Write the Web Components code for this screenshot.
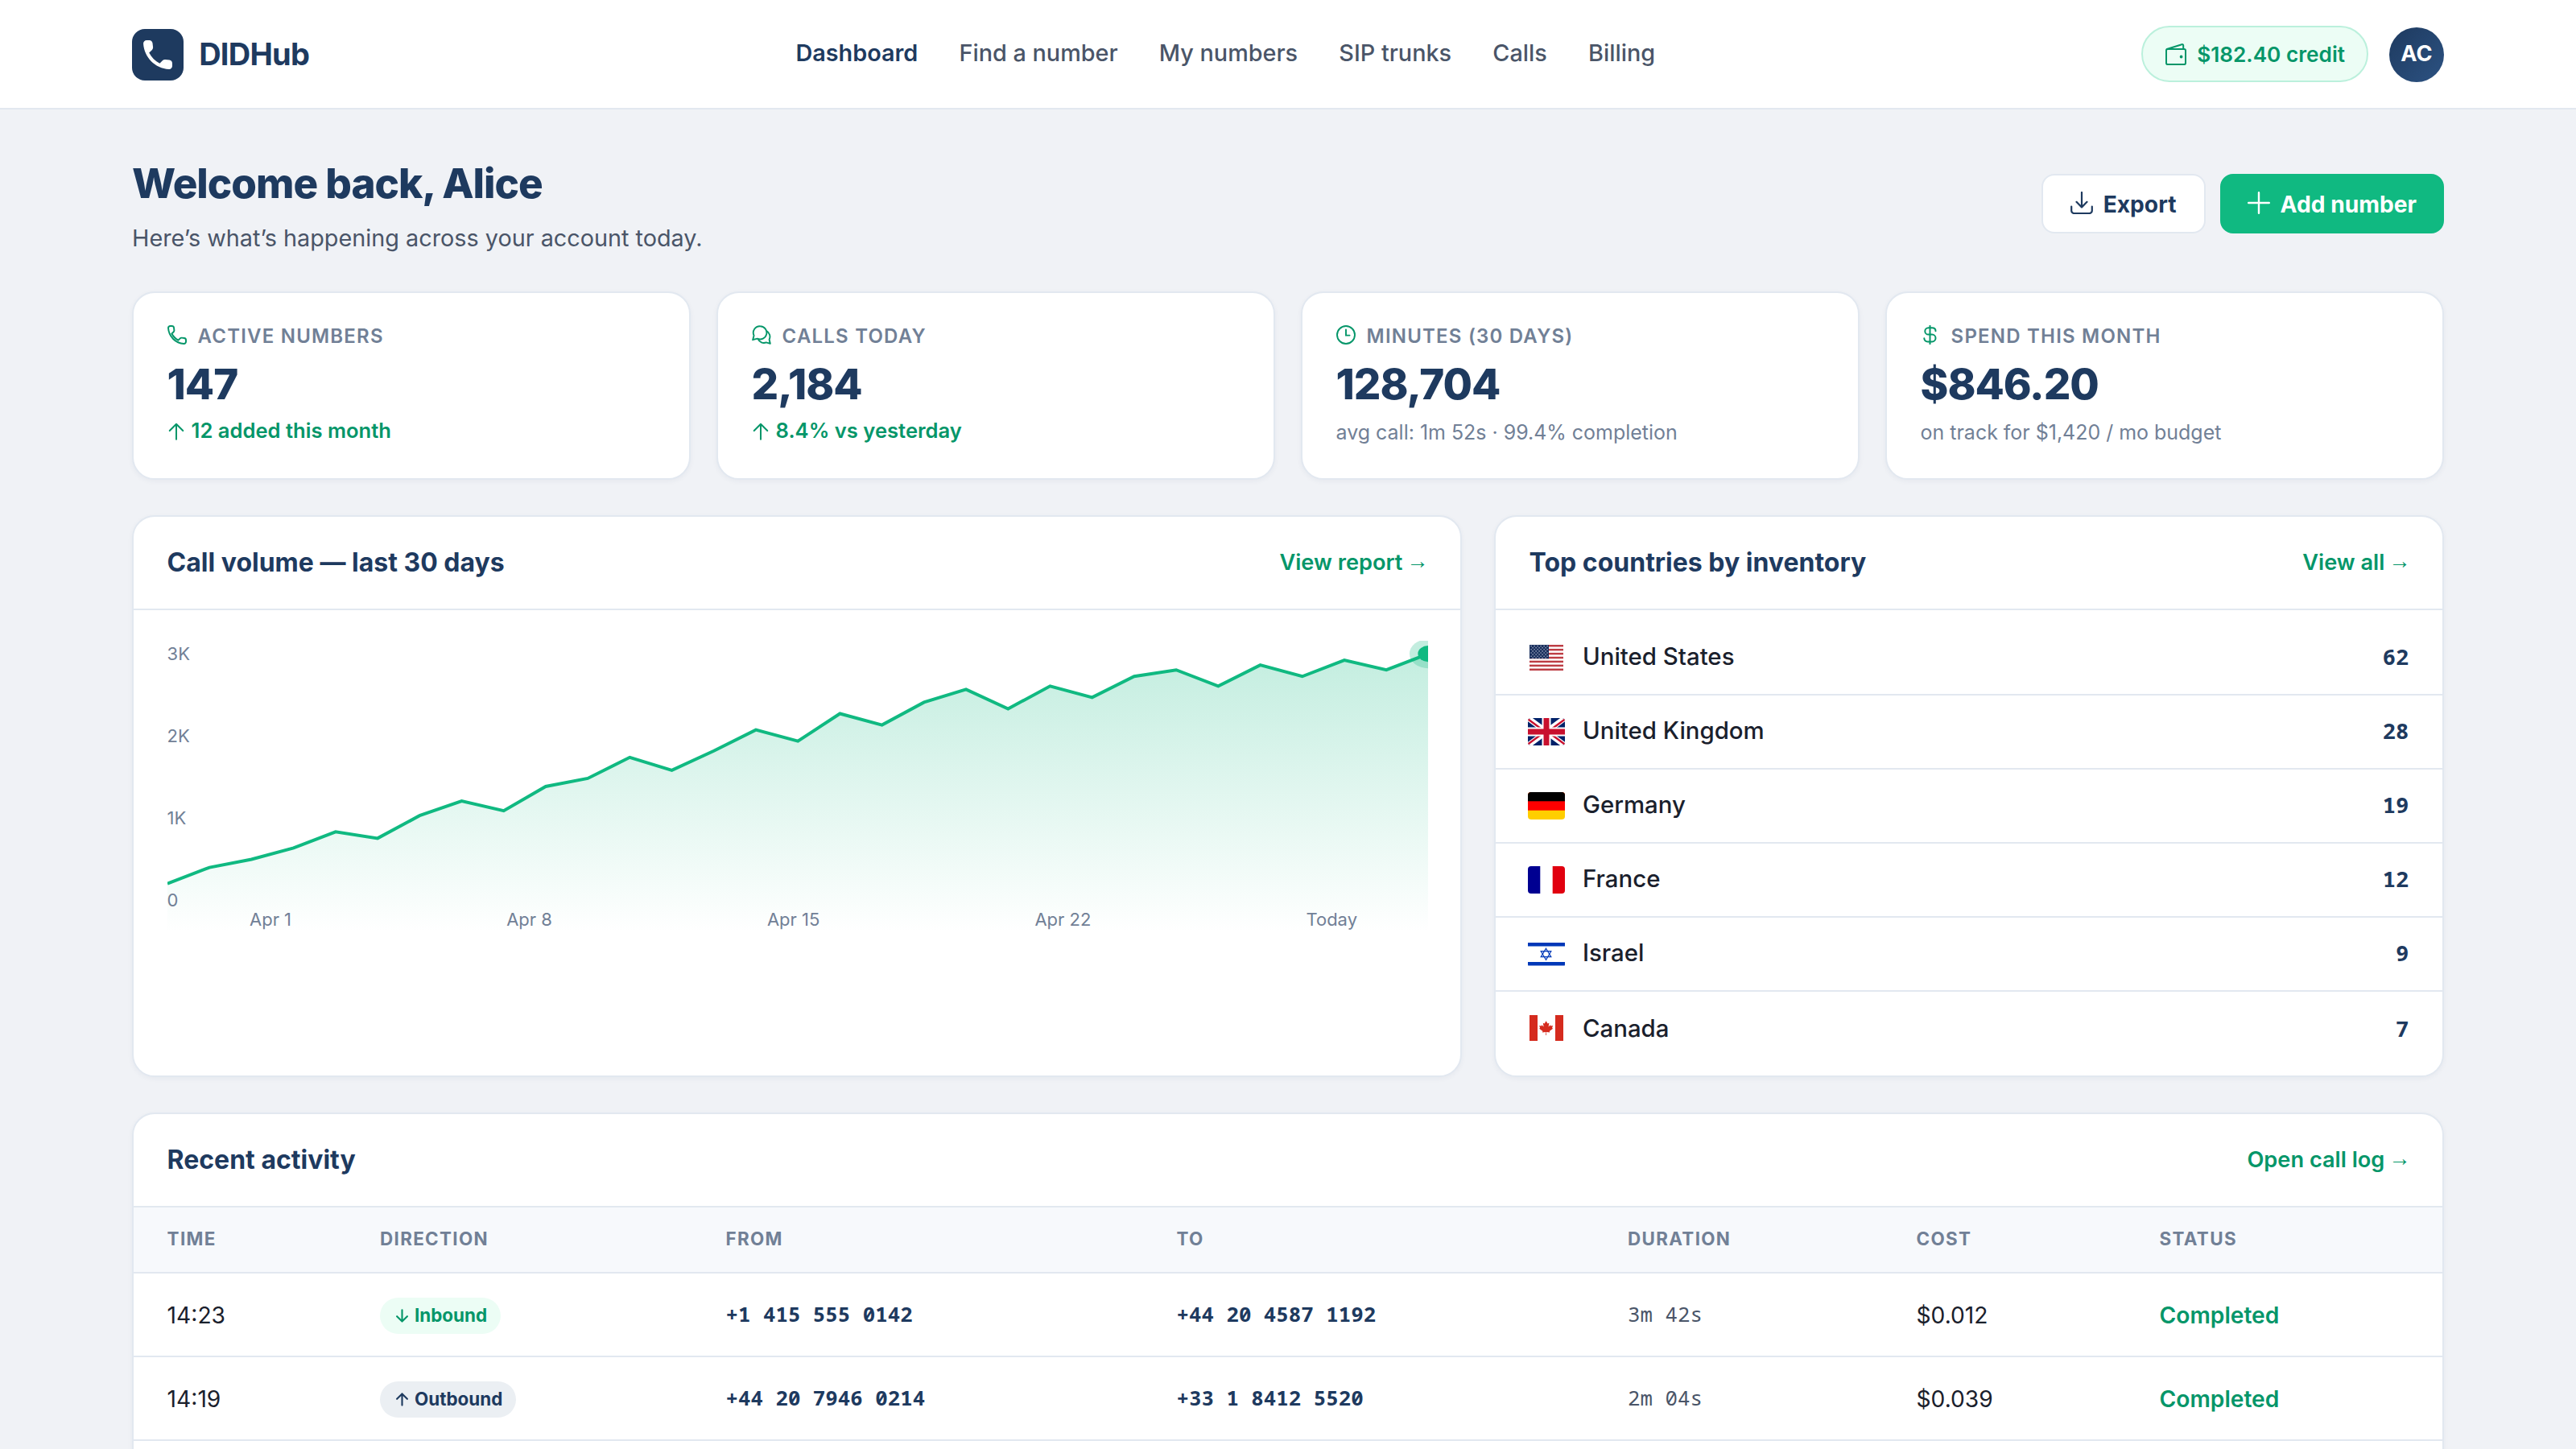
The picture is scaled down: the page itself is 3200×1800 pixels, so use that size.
<!DOCTYPE html>
<html lang="en">
<head>
<meta charset="utf-8">
<title>DIDHub</title>
<style>
  :root {
    --navy: #1e3a5f;
    --green: #10b981;
    --green-dark: #059669;
    --line: #e2e8f0;
    --text: #1a202c;
    --soft: #4a5568;
    --muted: #718096;
    --pad: 41.6px;
    --mono: "Noto Sans Mono", "DejaVu Sans Mono", monospace;
  }
  body {
    margin: 0;
    height: 1800px;
    overflow: hidden;
    background: #f0f2f6;
    color: var(--text);
    font-family: Inter, sans-serif;
    font-size: 28px;
  }
  main {
    padding: 54px 164px 0;
  }
  .stats {
    display: grid;
    grid-template-columns: repeat(4, 1fr);
    gap: 32px;
    margin: 46px 0 44px;
  }
  .panels {
    display: grid;
    grid-template-columns: 1.4fr 1fr;
    gap: 40px;
    margin-bottom: 44px;
  }
  .countries {
    padding: 14px 0;
  }
</style>
</head>
<body>
  <app-header></app-header>
  <main>
    <page-head heading="Welcome back, Alice" sub="Here’s what’s happening across your account today.">
      <app-button icon="download">Export</app-button>
      <app-button icon="plus" primary>Add number</app-button>
    </page-head>

    <div class="stats">
      <stat-card icon="phone" label="Active numbers" value="147" delta="12 added this month"></stat-card>
      <stat-card icon="chats" label="Calls today" value="2,184" delta="8.4% vs yesterday"></stat-card>
      <stat-card icon="clock" label="Minutes (30 days)" value="128,704" note="avg call: 1m 52s · 99.4% completion"></stat-card>
      <stat-card icon="dollar" label="Spend this month" value="$846.20" note="on track for $1,420 / mo budget"></stat-card>
    </div>

    <div class="panels">
      <panel-card heading="Call volume — last 30 days" link="View report">
        <volume-chart></volume-chart>
      </panel-card>
      <panel-card heading="Top countries by inventory" link="View all">
        <div class="countries">
          <country-row flag="us" count="62">United States</country-row>
          <country-row flag="gb" count="28">United Kingdom</country-row>
          <country-row flag="de" count="19">Germany</country-row>
          <country-row flag="fr" count="12">France</country-row>
          <country-row flag="il" count="9">Israel</country-row>
          <country-row flag="ca" count="7">Canada</country-row>
        </div>
      </panel-card>
    </div>

    <panel-card heading="Recent activity" link="Open call log">
      <call-table></call-table>
    </panel-card>
  </main>

<script>
const HANDSET = "m19.23 15.26-2.54-.29c-.61-.07-1.21.14-1.64.57l-1.84 1.84c-2.83-1.44-5.15-3.75-6.59-6.59l1.85-1.85c.43-.43.64-1.03.57-1.64l-.29-2.52c-.12-1.01-.97-1.77-1.99-1.77H5.03c-1.13 0-2.07.94-2 2.07.53 8.54 7.36 15.36 15.89 15.89 1.13.07 2.07-.87 2.07-2v-1.73c.01-1.01-.75-1.86-1.76-1.98z";

const ICONS = {
  call: `<svg viewBox="3 3 18 18" fill="currentColor"><path d="${HANDSET}"/></svg>`,
  phone: `<svg viewBox="2.2 2.2 19.6 19.6" fill="none" stroke="currentColor" stroke-width="1.6"><path d="${HANDSET}"/></svg>`,
  chats: `<svg viewBox="0 0 24 24" fill="none" stroke="currentColor" stroke-width="1.9" stroke-linejoin="round"><path d="M10.4 1.2a8.1 8.1 0 1 1-3.6 15.4L1.1 18.2l1.5-5.4A8.1 8.1 0 0 1 10.4 1.2z"/><path d="M18.2 7.2a8 8 0 0 1 3.4 10.6l1.2 5-5-1.4a8 8 0 0 1-10.2-4.2"/></svg>`,
  clock: `<svg viewBox="0 0 24 24" fill="none" stroke="currentColor" stroke-width="1.9" stroke-linecap="round"><circle cx="12" cy="12" r="11"/><path d="M12 5.5v7.1h4.6"/></svg>`,
  dollar: `<svg viewBox="0 0 24 24" fill="none" stroke="currentColor" stroke-width="2" stroke-linecap="round"><path d="M11.5.8v22.4M18.5 7.2c0-2.6-2-4-4.4-4H9.5a4.1 4.1 0 0 0 0 8.4h4.6a4.4 4.4 0 0 1 0 8.8H8.7c-2.6 0-4.4-1.6-4.4-4.1"/></svg>`,
  up: `<svg viewBox="0 0 24 24" fill="none" stroke="currentColor" stroke-width="2.2" stroke-linecap="round" stroke-linejoin="round"><path d="M12 22.5V2M3 11l9-9 9 9"/></svg>`,
  down: `<svg viewBox="0 0 24 24" fill="none" stroke="currentColor" stroke-width="3" stroke-linecap="round" stroke-linejoin="round"><path d="M12 2v20M3 13l9 9 9-9"/></svg>`,
  upbold: `<svg viewBox="0 0 24 24" fill="none" stroke="currentColor" stroke-width="3" stroke-linecap="round" stroke-linejoin="round"><path d="M12 22V2M3 11l9-9 9 9"/></svg>`,
  wallet: `<svg viewBox="0 0 26 28" fill="none" stroke="currentColor" stroke-width="2" stroke-linecap="round" stroke-linejoin="round"><rect x="1" y="8" width="24" height="19" rx="1.8"/><path d="M1.8 8 20.3 2.2c1-.3 1.9.3 1.9 1.3v4.3"/><circle cx="19.6" cy="17.5" r="1.2" fill="currentColor" stroke-width="1.4"/></svg>`,
  download: `<svg viewBox="0 0 28 28" fill="none" stroke="currentColor" stroke-width="2.2" stroke-linecap="round" stroke-linejoin="round"><path d="M14 1v18.5M7.5 12.8l6.5 6.7 6.5-6.7M1.2 18.5v5.3a3.2 3.2 0 0 0 3.2 3.2h19.2a3.2 3.2 0 0 0 3.2-3.2v-5.3"/></svg>`,
  plus: `<svg viewBox="0 0 28 28" fill="none" stroke="currentColor" stroke-width="2.4" stroke-linecap="round"><path d="M14 1.2v25.6M1.2 14h25.6"/></svg>`
};

// thirteen stripes and a staggered field of stars
const usStripes = [0, 2, 4, 6, 8, 10, 12].map(i => `<rect x="2" y="${(1 + i * 2.4615).toFixed(2)}" width="42" height="2.46" fill="#bd3d44"/>`).join("");
let usStars = "";
for (let r = 0; r < 8; r++) {
  for (let c = 0; c < (r % 2 ? 5 : 6); c++) {
    usStars += `<circle cx="${4.1 + c * 4 + (r % 2 ? 2 : 0)}" cy="${2.6 + r * 2.1}" r=".8"/>`;
  }
}

const FLAGS = {
  us: `<rect x="2" y="1" width="42" height="32" fill="#fff"/>${usStripes}<rect x="2" y="1" width="24" height="17.2" fill="#192f5d"/><g fill="#aab4c9">${usStars}</g>`,
  gb: `<rect width="46" height="34" fill="#012169"/><path d="M0 0l46 34M46 0L0 34" stroke="#fff" stroke-width="7"/><path d="M0 1.3 18 14.5M46 32.7 28 19.5M-1 33.2 17 20M47 .8 29 14" stroke="#c8102e" stroke-width="2.4"/><path d="M23 0v34M0 17h46" stroke="#fff" stroke-width="11"/><path d="M23 0v34M0 17h46" stroke="#c8102e" stroke-width="7"/>`,
  de: `<rect width="46" height="34" fill="#ffce00"/><rect width="46" height="22.7" fill="#f00"/><rect width="46" height="11.3"/>`,
  fr: `<rect width="46" height="34" fill="#fff"/><rect width="15.3" height="34" fill="#000091"/><rect x="30.7" width="15.3" height="34" fill="#e1000f"/>`,
  il: `<rect width="46" height="34" fill="#fff"/><path d="M0 5.2h46M0 29.2h46" stroke="#0038b8" stroke-width="4.4"/><path d="M22.5 10.2l6.3 10.5H16.2zM22.5 24.4l6.3-10.7H16.2z" fill="none" stroke="#0038b8" stroke-width="1.2"/>`,
  ca: `<rect x="2" y="1" width="42" height="32" fill="#fff"/><rect x="2" y="1" width="10" height="32" fill="#d52b1e"/><rect x="34" y="1" width="10" height="32" fill="#d52b1e"/><path d="M22.6 8.3l-1.9 3.3-1.9-.8.8 4.6-2.3-2.2-.5 1.3-2.6-.4.9 2.9-1 .8 4.3 3.3-.5 1.5 4.4-.6-.1 4h.8l-.1-4 4.4.6-.5-1.5 4.3-3.3-1-.8.9-2.9-2.6.4-.5-1.3-2.3 2.2.8-4.6-1.9.8z" fill="#d52b1e"/>`
};

class AppIcon extends HTMLElement {
  constructor() {
    super();
    this.attachShadow({ mode: "open" });
  }
  connectedCallback() {
    this.shadowRoot.innerHTML = `
      <style>
        :host { display: block; flex: none; width: 24px; height: 24px; }
        svg { display: block; width: 100%; height: 100%; }
      </style>
      ${ICONS[this.getAttribute("name")]}
    `;
  }
}

class AppHeader extends HTMLElement {
  constructor() {
    super();
    this.attachShadow({ mode: "open" });
    this.shadowRoot.innerHTML = `
      <style>
        :host {
          display: flex;
          align-items: center;
          justify-content: space-between;
          height: 134px;
          padding: 0 164px;
          background: #fff;
          border-bottom: 2px solid var(--line);
        }
        .brand {
          display: flex;
          align-items: center;
          gap: 19.2px;
          color: var(--navy);
          font-size: 38px;
          font-weight: 700;
          letter-spacing: -0.02em;
        }
        .logo {
          display: grid;
          place-items: center;
          width: 64px;
          height: 64px;
          border-radius: 16px;
          background: var(--navy);
          color: #fff;
          margin-top: 2px;
        }
        .logo app-icon { width: 36px; height: 36px; }
        nav {
          display: flex;
          gap: 51.2px;
          color: var(--soft);
          font-size: 28.8px;
          font-weight: 500;
          line-height: 44px;
          padding-bottom: 2px;
        }
        nav .active { color: var(--navy); font-weight: 600; }
        .account { display: flex; align-items: center; gap: 26px; }
        .credit {
          display: flex;
          align-items: center;
          gap: 12.8px;
          box-sizing: border-box;
          height: 70px;
          padding: 0 27px 0 28px;
          border: 2px solid #bbf0dc;
          border-radius: 35px;
          background: #ecfdf5;
          color: var(--green-dark);
          font-size: 26.2px;
          font-weight: 600;
        }
        .credit app-icon { width: 26px; height: 28px; }
        .avatar {
          display: grid;
          place-items: center;
          box-sizing: border-box;
          width: 68px;
          height: 68px;
          padding-bottom: 3px;
          border-radius: 50%;
          background: linear-gradient(135deg, #1e3a5f, #2c5282);
          color: #fff;
          font-size: 27.2px;
          font-weight: 700;
          margin-top: 2px;
        }
      </style>
      <div class="brand"><div class="logo"><app-icon name="call"></app-icon></div><span>DIDHub</span></div>
      <nav>
        <span class="active">Dashboard</span>
        <span>Find a number</span>
        <span>My numbers</span>
        <span>SIP trunks</span>
        <span>Calls</span>
        <span>Billing</span>
      </nav>
      <div class="account">
        <div class="credit"><app-icon name="wallet"></app-icon><span>$182.40 credit</span></div>
        <div class="avatar">AC</div>
      </div>
    `;
  }
}

class PageHead extends HTMLElement {
  constructor() {
    super();
    this.attachShadow({ mode: "open" });
  }
  connectedCallback() {
    this.shadowRoot.innerHTML = `
      <style>
        :host { display: flex; align-items: center; justify-content: space-between; }
        h1 {
          margin: 0 0 12px;
          color: var(--navy);
          font-size: 51.2px;
          font-weight: 800;
          line-height: 74px;
          letter-spacing: -0.02em;
        }
        p { margin: 0; color: var(--soft); font-size: 28.8px; line-height: 40px; }
        .actions { display: flex; gap: 18px; }
      </style>
      <div>
        <h1>${this.getAttribute("heading")}</h1>
        <p>${this.getAttribute("sub")}</p>
      </div>
      <div class="actions"><slot></slot></div>
    `;
  }
}

class AppButton extends HTMLElement {
  constructor() {
    super();
    this.attachShadow({ mode: "open" });
  }
  connectedCallback() {
    this.shadowRoot.innerHTML = `
      <style>
        :host {
          display: flex;
          align-items: center;
          gap: 13px;
          box-sizing: border-box;
          height: 74px;
          padding: 0 34px;
          border: 2px solid var(--line);
          border-radius: 16px;
          background: #fff;
          color: var(--navy);
          font-size: 28.2px;
          font-weight: 700;
        }
        :host([primary]) {
          padding: 0 32px;
          border-color: var(--green);
          background: var(--green);
          color: #fff;
        }
        app-icon { width: 28px; height: 28px; margin-bottom: 2px; }
        span { padding-top: 1px; }
      </style>
      <app-icon name="${this.getAttribute("icon")}"></app-icon>
      <span><slot></slot></span>
    `;
  }
}

class StatCard extends HTMLElement {
  constructor() {
    super();
    this.attachShadow({ mode: "open" });
  }
  connectedCallback() {
    const delta = this.getAttribute("delta");
    const foot = delta
      ? `<div class="delta"><app-icon name="up"></app-icon><span>${delta}</span></div>`
      : `<div class="note">${this.getAttribute("note")}</div>`;
    this.shadowRoot.innerHTML = `
      <style>
        :host {
          display: block;
          box-sizing: border-box;
          height: 234px;
          padding: 36px var(--pad) 0;
          border: 2px solid var(--line);
          border-radius: 28px;
          background: #fff;
          box-shadow: 0 2px 6px rgba(30, 58, 95, 0.05);
        }
        .label {
          display: flex;
          align-items: center;
          gap: 14px;
          color: var(--muted);
          font-size: 24px;
          font-weight: 600;
          line-height: 36px;
          letter-spacing: 0.05em;
          text-transform: uppercase;
        }
        .label app-icon { width: 24px; height: 24px; margin-bottom: 5px; color: var(--green-dark); }
        .value {
          margin: 13px 0 12px;
          color: var(--navy);
          font-size: 52.8px;
          font-weight: 800;
          line-height: 56px;
          letter-spacing: -0.02em;
        }
        .delta {
          display: flex;
          align-items: center;
          gap: 8px;
          color: var(--green-dark);
          font-size: 25.6px;
          font-weight: 600;
          line-height: 36px;
        }
        .delta app-icon { width: 22px; height: 22px; margin-top: 2px; }
        .note { padding-top: 2px; color: var(--muted); font-size: 24.96px; line-height: 36px; }
      </style>
      <div class="label"><app-icon name="${this.getAttribute("icon")}"></app-icon><span>${this.getAttribute("label")}</span></div>
      <div class="value">${this.getAttribute("value")}</div>
      ${foot}
    `;
  }
}

class PanelCard extends HTMLElement {
  constructor() {
    super();
    this.attachShadow({ mode: "open" });
  }
  connectedCallback() {
    this.shadowRoot.innerHTML = `
      <style>
        :host {
          display: block;
          overflow: hidden;
          border: 2px solid var(--line);
          border-radius: 28px;
          background: #fff;
          box-shadow: 0 2px 6px rgba(30, 58, 95, 0.05);
        }
        header {
          display: flex;
          align-items: center;
          justify-content: space-between;
          height: 114px;
          padding: 0 var(--pad);
          border-bottom: 2px solid var(--line);
        }
        h2 { margin: 0; color: var(--navy); font-size: 32px; font-weight: 700; line-height: 44px; }
        a { color: var(--green-dark); font-size: 27.2px; font-weight: 600; line-height: 44px; white-space: nowrap; }
        .arrow { margin: 0 -2px; font-family: "Liberation Sans", sans-serif; font-weight: 400; line-height: 1; vertical-align: 2px; }
      </style>
      <header>
        <h2>${this.getAttribute("heading")}</h2>
        <a>${this.getAttribute("link")} <span class="arrow">→</span></a>
      </header>
      <slot></slot>
    `;
  }
}

class VolumeChart extends HTMLElement {
  constructor() {
    super();
    this.attachShadow({ mode: "open" });
    const data = [150, 140, 135, 128, 118, 122, 108, 99, 105, 90, 85, 72, 80, 68, 55, 62, 45, 52, 38, 30, 42, 28, 35, 22, 18, 28, 15, 22, 12, 18, 8];
    const points = data.map((y, i) => `${i * 20},${y}`);
    this.shadowRoot.innerHTML = `
      <style>
        :host { display: block; padding: 38px 40px 0 var(--pad); }
        .plot { display: grid; height: 362px; color: var(--muted); font-size: 22px; line-height: 26px; }
        .plot > * { grid-area: 1 / 1; }
        svg { display: block; width: 100%; height: 362px; }
        .y { display: flex; flex-direction: column; justify-content: space-between; justify-self: start; height: 332px; padding-top: 3px; }
        .x { display: flex; justify-content: space-between; align-self: end; padding: 0 88px 0 102.4px; margin-bottom: 3px; }
      </style>
      <div class="plot">
        <svg viewBox="0 0 600 180" preserveAspectRatio="none">
          <defs>
            <linearGradient id="fade" x1="0" y1="0" x2="0" y2="1">
              <stop offset="0" stop-color="#10b981" stop-opacity=".25"/>
              <stop offset="1" stop-color="#10b981" stop-opacity="0"/>
            </linearGradient>
          </defs>
          <polygon points="${points.join(" ")} 600,180 0,180" fill="url(#fade)"/>
          <polyline points="${points.join(" ")}" fill="none" stroke="#10b981" stroke-width="4" vector-effect="non-scaling-stroke"/>
          <circle cx="600" cy="8" r="9" fill="#10b981" opacity=".25"/>
          <circle cx="600" cy="8" r="5" fill="#10b981"/>
        </svg>
        <div class="y"><span>3K</span><span>2K</span><span>1K</span><span>0</span></div>
        <div class="x"><span>Apr 1</span><span>Apr 8</span><span>Apr 15</span><span>Apr 22</span><span>Today</span></div>
      </div>
    `;
  }
}

class CountryRow extends HTMLElement {
  constructor() {
    super();
    this.attachShadow({ mode: "open" });
  }
  connectedCallback() {
    this.shadowRoot.innerHTML = `
      <style>
        :host {
          display: flex;
          align-items: center;
          height: 90px;
          padding: 0 var(--pad) 0 40px;
          border-bottom: 2px solid var(--line);
          font-size: 29.4px;
          font-weight: 500;
        }
        svg { width: 46px; height: 34px; margin-right: 22px; border-radius: 4px; }
        span, b { padding-bottom: 4px; }
        b { margin-left: auto; color: var(--navy); font-family: var(--mono); font-size: 27.2px; font-weight: 700; }
        :host(:last-child) { border-bottom: none; }
        :host(:last-child) span, :host(:last-child) b { padding-bottom: 0; }
      </style>
      <svg viewBox="0 0 46 34">${FLAGS[this.getAttribute("flag")]}</svg>
      <span><slot></slot></span>
      <b>${this.getAttribute("count")}</b>
    `;
  }
}

class DirectionBadge extends HTMLElement {
  constructor() {
    super();
    this.attachShadow({ mode: "open" });
  }
  connectedCallback() {
    this.shadowRoot.innerHTML = `
      <style>
        :host {
          display: inline-flex;
          align-items: center;
          gap: 7px;
          height: 45px;
          padding: 0 17px 0 19px;
          border-radius: 23px;
          background: #ebeff3;
          color: var(--navy);
          font-size: 22.4px;
          font-weight: 700;
        }
        :host([in]) { background: #ecfdf5; color: var(--green-dark); }
        app-icon { width: 17px; height: 17px; }
      </style>
      <app-icon name="${this.hasAttribute("in") ? "down" : "upbold"}"></app-icon>
      <span><slot></slot></span>
    `;
  }
}

class CallTable extends HTMLElement {
  constructor() {
    super();
    this.attachShadow({ mode: "open" });
    const rows = [
      ["14:23", "in", "+1 415 555 0142", "+44 20 4587 1192", "3m 42s", "$0.012", "Completed"],
      ["14:19", "out", "+44 20 7946 0214", "+33 1 8412 5520", "2m 04s", "$0.039", "Completed"]
    ];
    this.shadowRoot.innerHTML = `
      <style>
        :host { display: block; min-height: 420px; }
        .row {
          display: grid;
          grid-template-columns: 264.4px 429.5px 560px 560.5px 358.5px 302px 1fr;
          align-items: center;
          box-sizing: border-box;
          height: 104px;
          padding: 2px 0 0 var(--pad);
          border-bottom: 2px solid var(--line);
          font-size: 28.2px;
          line-height: 44px;
        }
        .head {
          height: 82px;
          padding: 0 0 2px var(--pad);
          background: #f7f9fc;
          color: var(--muted);
          font-size: 22.4px;
          font-weight: 700;
          letter-spacing: 0.06em;
          text-transform: uppercase;
        }
        .num, .dur { padding-bottom: 4px; font-family: var(--mono); font-size: 25.8px; }
        .num { color: var(--navy); font-weight: 700; }
        .dur { color: var(--soft); }
        .ok { color: var(--green-dark); font-weight: 600; }
        .dir { display: flex; }
      </style>
      <div class="row head">
        <span>Time</span><span>Direction</span><span>From</span><span>To</span><span>Duration</span><span>Cost</span><span>Status</span>
      </div>
      ${rows.map(([time, dir, from, to, duration, cost, status]) => `
        <div class="row">
          <span>${time}</span>
          <span class="dir">${dir === "in" ? "<direction-badge in>Inbound</direction-badge>" : "<direction-badge>Outbound</direction-badge>"}</span>
          <span class="num">${from}</span>
          <span class="num">${to}</span>
          <span class="dur">${duration}</span>
          <span>${cost}</span>
          <span class="ok">${status}</span>
        </div>`).join("")}
    `;
  }
}

customElements.define("app-icon", AppIcon);
customElements.define("app-header", AppHeader);
customElements.define("page-head", PageHead);
customElements.define("app-button", AppButton);
customElements.define("stat-card", StatCard);
customElements.define("panel-card", PanelCard);
customElements.define("volume-chart", VolumeChart);
customElements.define("country-row", CountryRow);
customElements.define("direction-badge", DirectionBadge);
customElements.define("call-table", CallTable);
</script>
</body>
</html>
